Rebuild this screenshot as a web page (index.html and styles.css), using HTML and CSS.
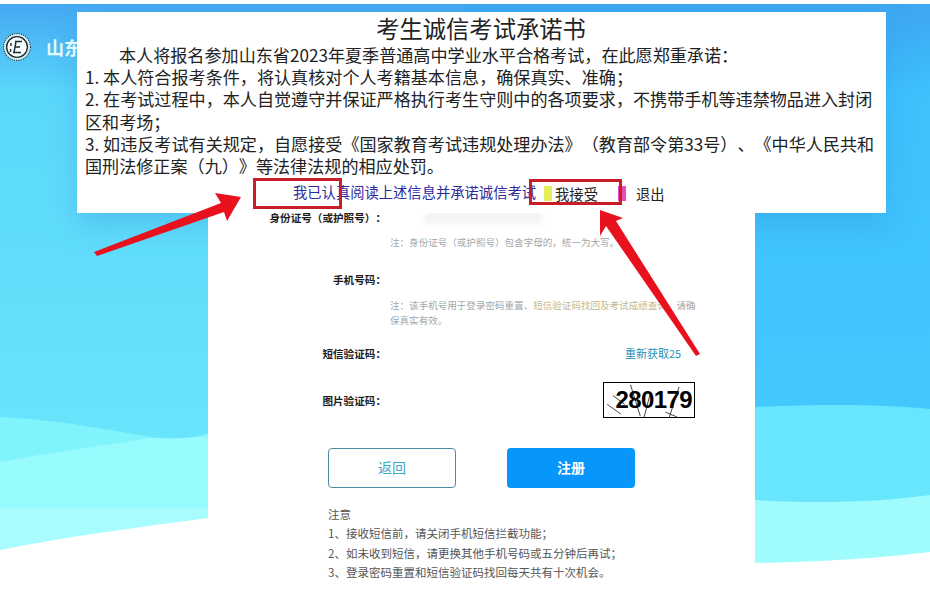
FILE: index.html
```html
<!DOCTYPE html>
<html lang="zh-CN">
<head>
<meta charset="utf-8">
<title>考生诚信考试承诺书</title>
<link rel="stylesheet" href="styles.css">
</head>
<body>
<div class="page">
  <svg class="backdrop" viewBox="0 0 930 598" preserveAspectRatio="none" aria-hidden="true">
    <defs>
      <linearGradient id="skyLeft" x1="0" y1="0" x2="0" y2="1">
        <stop offset="0" stop-color="#58d4fb"/>
        <stop offset="1" stop-color="#6eeafc"/>
      </linearGradient>
      <linearGradient id="skyRight" x1="0" y1="0" x2="0" y2="1">
        <stop offset="0" stop-color="#3cc0fd"/>
        <stop offset="1" stop-color="#45ccfd"/>
      </linearGradient>
      <linearGradient id="topfade" x1="0" y1="0" x2="0" y2="1">
        <stop offset="0" stop-color="#3f9ff0" stop-opacity="0.8"/>
        <stop offset="1" stop-color="#3f9ff0" stop-opacity="0"/>
      </linearGradient>
    </defs>
    <rect x="0" y="4" width="465" height="594" fill="url(#skyLeft)"/>
    <rect x="465" y="4" width="465" height="594" fill="url(#skyRight)"/>
    <rect x="0" y="4" width="930" height="90" fill="url(#topfade)"/>
    <path d="M0 417 C60 420 110 430 150 437 C175 440 195 438 208 433 L208 598 L0 598Z" fill="#80f4fc"/>
    <path d="M0 462 C50 452 110 445 150 438 C175 439 195 438 208 436 L208 598 L0 598Z" fill="#98fbfd"/>
    <path d="M0 508 L208 508 L208 598 L0 598Z" fill="#a8fcfd"/>
    <path d="M755 407 C820 404 880 404 930 409 L930 598 L755 598Z" fill="#68e6fe"/>
    <path d="M755 500 C820 504 880 502 930 495 L930 598 L755 598Z" fill="#a0fbfd"/>
    <path d="M0 550 C70 536 140 527 208 518 L755 563 C820 562 880 558 930 552 L930 598 L0 598Z" fill="#fff"/>
  </svg>
  <div class="modal-glow"></div>

  <header class="brand">
    <svg class="brand-logo" viewBox="0 0 28 28" aria-hidden="true">
      <circle cx="14" cy="14" r="13.4" fill="#d8f2f7" stroke="#24343d" stroke-width="1.1" stroke-dasharray="1.2 1.1"/>
      <circle cx="14" cy="14" r="10.4" fill="#f8fdfd" stroke="#1d2d36" stroke-width="1.4"/>
      <path d="M12 8.5h7M13 8.5 11 19.5M10 19.5h8M12 14h5M8 10v3M7.5 16v3" fill="none" stroke="#1d2d36" stroke-width="1.4"/>
    </svg>
    <span class="brand-name">山东省招生考试院</span>
  </header>

  <main class="card">
    <div class="row row-id">
      <span class="label">身份证号（或护照号）：</span>
      <span class="masked"></span>
    </div>
    <p class="hint hint-id">注：身份证号（或护照号）包含字母的，统一为大写。</p>
    <div class="row row-phone">
      <span class="label">手机号码：</span>
    </div>
    <p class="hint hint-phone">注：该手机号用于登录密码重置、<span class="warm">短信验证码找回及考试成绩查询</span>，请确保真实有效。</p>
    <div class="row row-sms">
      <span class="label">短信验证码：</span>
      <span class="resend">重新获取25</span>
    </div>
    <div class="row row-captcha">
      <span class="label">图片验证码：</span>
      <span class="captcha">
        <svg class="captcha-noise" viewBox="0 0 90 35" aria-hidden="true">
          <path d="M2 22 16 32M8 13 20 22M26 2 36 34M46 12 40 35M62 30 74 35M76 4 66 35" fill="none" stroke="#111" stroke-width="0.8"/>
        </svg>
        <span class="captcha-text">280179</span>
      </span>
    </div>
    <div class="actions">
      <button class="btn btn-back" type="button">返回</button>
      <button class="btn btn-submit" type="button">注册</button>
    </div>
    <div class="notice">
      <p>注意</p>
      <p>1、接收短信前，请关闭手机短信拦截功能；</p>
      <p>2、如未收到短信，请更换其他手机号码或五分钟后再试；</p>
      <p>3、登录密码重置和短信验证码找回每天共有十次机会。</p>
    </div>
  </main>

  <section class="modal">
    <h1 class="modal-title">考生诚信考试承诺书</h1>
    <p class="lead">本人将报名参加山东省2023年夏季普通高中学业水平合格考试，在此愿郑重承诺：</p>
    <p>1. 本人符合报考条件，将认真核对个人考籍基本信息，确保真实、准确；</p>
    <p>2. 在考试过程中，本人自觉遵守并保证严格执行考生守则中的各项要求，不携带手机等违禁物品进入封闭区和考场；</p>
    <p>3. 如违反考试有关规定，自愿接受《国家教育考试违规处理办法》（教育部令第33号）、《中华人民共和国刑法修正案（九）》等法律法规的相应处罚。</p>
    <div class="consent">
      <span class="consent-text">我已认真阅读上述信息并承诺诚信考试</span>
      <span class="marker marker-yellow"></span>
      <span class="accept">我接受</span>
      <span class="marker marker-pink"></span>
      <span class="quit">退出</span>
    </div>
  </section>

  <span class="callout callout-left"></span>
  <span class="callout callout-right"></span>
  <svg class="arrows" viewBox="0 0 930 598" aria-hidden="true">
    <path d="M94 252 221 203 215 193 241 197 227 221 224 212 97 256Z" fill="#e8121f"/>
    <path d="M600 210 623 218 616 221 700 354 696 356 606 226 600 236Z" fill="#e8121f"/>
  </svg>
</div>
</body>
</html>
```

FILE: styles.css
```css
* { box-sizing: border-box; }

html, body {
  margin: 0;
  padding: 0;
  background: #fff;
}

body {
  font-family: "Noto Sans CJK SC", "Noto Sans", sans-serif;
  font-kerning: none;
  text-spacing-trim: space-all;
}

p { margin: 0; }

.page {
  position: relative;
  width: 930px;
  height: 598px;
  overflow: hidden;
}

.backdrop {
  position: absolute;
  inset: 0;
  width: 930px;
  height: 598px;
}

.modal-glow {
  position: absolute;
  top: 12px;
  left: 77px;
  width: 809px;
  height: 201px;
  box-shadow: 0 12px 28px rgba(45, 130, 215, 0.3);
}

.brand {
  position: relative;
  display: flex;
  align-items: center;
  gap: 15px;
  height: 94px;
  padding-left: 3px;
}

.brand-logo {
  width: 28px;
  height: 28px;
  flex: none;
}

.brand-name {
  color: #e4fafd;
  font-size: 18px;
  font-weight: 700;
}

.card {
  position: relative;
  width: 547px;
  height: 504px;
  margin-left: 208px;
  background: #fff;
}

.row {
  position: absolute;
  left: 0;
  right: 0;
  display: flex;
  align-items: center;
  height: 20px;
}

.row-id { top: 113px; }
.row-phone { top: 175px; }
.row-sms { top: 249px; }
.row-captcha { top: 296px; }

.label {
  width: 178px;
  flex: none;
  color: #1c1c1c;
  font-size: 10.6px;
  font-weight: 700;
  text-align: right;
  white-space: nowrap;
}

.masked {
  width: 116px;
  height: 14px;
  margin-left: 39px;
  background: #f3f4f6;
  filter: blur(2px);
}

.hint {
  position: absolute;
  left: 182px;
  width: 310px;
  color: #a2a8aa;
  font-size: 9.55px;
  line-height: 15px;
}

.hint-id { top: 141px; }
.hint-phone { top: 204px; }

.warm { color: #c2b98c; }

.resend {
  margin-left: 239px;
  color: #1d8fb5;
  font-size: 11px;
  white-space: nowrap;
}

.captcha {
  position: relative;
  display: block;
  width: 92px;
  height: 36px;
  margin-left: 217px;
  border: 1.5px solid #000;
  background: #fff;
}

.captcha-noise {
  position: absolute;
  inset: 0;
  width: 100%;
  height: 100%;
}

.captcha-text {
  display: block;
  color: #000;
  font-family: "Liberation Sans", sans-serif;
  font-size: 24px;
  font-weight: 700;
  line-height: 33px;
  letter-spacing: -0.6px;
  text-align: right;
  padding-right: 2px;
}

.actions {
  position: absolute;
  top: 354px;
  left: 120px;
  display: flex;
  gap: 51px;
}

.btn {
  width: 128px;
  height: 40px;
  padding: 0 0 3px;
  border-radius: 4px;
  font-family: inherit;
  font-size: 14px;
}

.btn-back {
  border: 1px solid #4b8ea3;
  background: #fff;
  color: #3aa7cd;
}

.btn-submit {
  border: 0;
  background: #0896fb;
  color: #fff;
  font-weight: 700;
}

.notice {
  position: absolute;
  top: 411px;
  left: 120px;
  width: 320px;
  color: #555;
  font-size: 11.5px;
  line-height: 19.3px;
  white-space: nowrap;
}

.modal {
  position: absolute;
  top: 12px;
  left: 77px;
  width: 809px;
  height: 201px;
  padding: 1px 9px 0 8px;
  background: #fff;
  color: #222;
  font-size: 17.1px;
  line-height: 22.2px;
}

.modal-title {
  margin: 0;
  color: #222;
  font-size: 23.3px;
  font-weight: 400;
  line-height: 31px;
  text-align: center;
}

.lead { text-indent: 34px; }

.consent {
  display: flex;
  align-items: center;
  height: 20px;
  margin-top: 6px;
  font-size: 14.3px;
  line-height: 20px;
  white-space: nowrap;
}

.consent-text {
  margin-left: 208px;
  margin-top: -2px;
  color: #2c2a9c;
}

.marker {
  width: 8px;
  height: 15px;
  flex: none;
}

.marker-yellow {
  margin-left: 8px;
  background: #e6ec5c;
}

.marker-pink {
  margin-left: 20px;
  background: #ea4cc0;
}

.accept {
  margin-left: 3px;
  margin-top: 1px;
  color: #222;
}

.quit {
  margin-left: 10px;
  margin-top: 1px;
  color: #222;
}

.callout {
  position: absolute;
  border: 3px solid #c81e28;
}

.callout-left {
  top: 178px;
  left: 253px;
  width: 89px;
  height: 31px;
}

.callout-right {
  top: 179px;
  left: 529px;
  width: 93px;
  height: 26px;
}

.arrows {
  position: absolute;
  inset: 0;
  width: 930px;
  height: 598px;
  pointer-events: none;
}
```
